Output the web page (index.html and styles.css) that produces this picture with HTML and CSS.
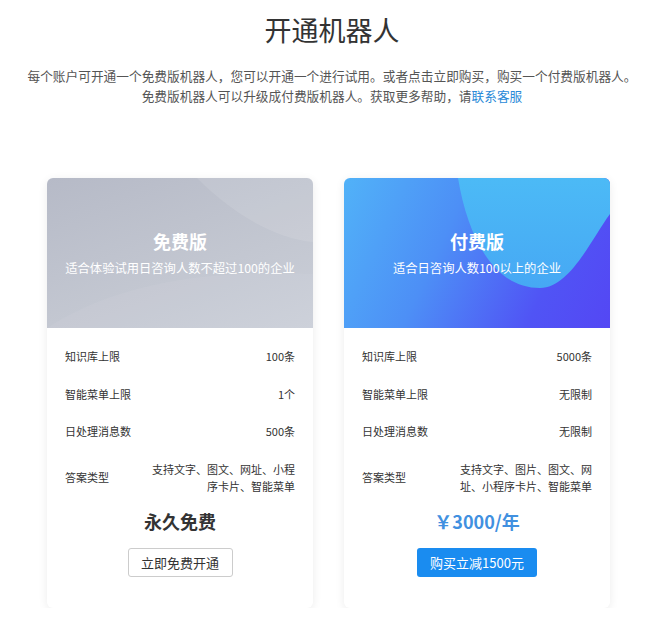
FILE: index.html
```html
<!DOCTYPE html>
<html lang="zh-CN">
<head>
    <meta charset="UTF-8">
    <meta name="viewport" content="width=device-width, initial-scale=1.0">
    <title>开通机器人</title>
    <link rel="stylesheet" href="styles.css">
</head>
<body>
    <h1 class="page-title">开通机器人</h1>
    <p class="page-desc">
        每个账户可开通一个免费版机器人，您可以开通一个进行试用。或者点击立即购买，购买一个付费版机器人。<br>
        免费版机器人可以升级成付费版机器人。获取更多帮助，请<a href="#" class="link">联系客服</a>
    </p>

    <div class="plans">
        <div class="plan">
            <div class="plan-head plan-head-free">
                <svg class="plan-deco" viewBox="0 0 266 150" preserveAspectRatio="none">
                    <path d="M150 0 C 190 40, 230 60, 266 64 L 266 0 Z" fill="#ffffff" fill-opacity="0.10"/>
                    <path d="M0 150 C 60 110, 150 90, 266 96 L 266 150 Z" fill="#ffffff" fill-opacity="0.05"/>
                </svg>
                <h3 class="plan-name">免费版</h3>
                <p class="plan-sub">适合体验试用日咨询人数不超过100的企业</p>
            </div>
            <div class="plan-body">
                <div class="row"><span>知识库上限</span><span>100条</span></div>
                <div class="row"><span>智能菜单上限</span><span>1个</span></div>
                <div class="row"><span>日处理消息数</span><span>500条</span></div>
                <div class="row"><span>答案类型</span><span class="val">支持文字、图文、网址、小程<br>序卡片、智能菜单</span></div>
                <div class="price">永久免费</div>
                <button class="btn btn-outline">立即免费开通</button>
            </div>
        </div>

        <div class="plan">
            <div class="plan-head plan-head-paid">
                <svg class="plan-deco" viewBox="0 0 266 150" preserveAspectRatio="none">
                    <defs>
                        <linearGradient id="cyan" x1="0" y1="0" x2="0" y2="1">
                            <stop offset="0" stop-color="#4cbaf6"/>
                            <stop offset="1" stop-color="#46a8f4"/>
                        </linearGradient>
                    </defs>
                    <path d="M114 0 C 124 60, 150 110, 196 110 C 226 110, 248 60, 266 36 L 266 0 Z" fill="url(#cyan)"/>
                </svg>
                <h3 class="plan-name">付费版</h3>
                <p class="plan-sub">适合日咨询人数100以上的企业</p>
            </div>
            <div class="plan-body">
                <div class="row"><span>知识库上限</span><span>5000条</span></div>
                <div class="row"><span>智能菜单上限</span><span>无限制</span></div>
                <div class="row"><span>日处理消息数</span><span>无限制</span></div>
                <div class="row"><span>答案类型</span><span class="val">支持文字、图片、图文、网<br>址、小程序卡片、智能菜单</span></div>
                <div class="price price-blue">￥3000/年</div>
                <button class="btn btn-primary">购买立减1500元</button>
            </div>
        </div>
    </div>
</body>
</html>
```

FILE: styles.css
```css
body {
    margin: 0;
    background-color: #fff;
    font-family: "Noto Sans CJK SC", "Noto Sans", sans-serif;
    color: #333;
}
.page-title {
    margin: 14px 0 0;
    font-size: 27px;
    line-height: 32px;
    font-weight: 400;
    text-align: center;
    color: #333;
}
.page-desc {
    margin: 20px 0 0;
    font-size: 12.7px;
    line-height: 20px;
    text-align: center;
    color: #555;
}
.link {
    color: #2a8ad8;
    text-decoration: none;
}
.plans {
    display: flex;
    gap: 31px;
    margin: 72px 0 0 47px;
}
.plan {
    width: 266px;
    background-color: #fff;
    border-radius: 6px;
    box-shadow: 0 2px 10px rgba(0, 0, 0, 0.08);
    overflow: hidden;
}
.plan-head {
    position: relative;
    height: 150px;
    box-sizing: border-box;
    padding-top: 51px;
    text-align: center;
    color: #fff;
}
.plan-head-free {
    background: linear-gradient(160deg, #b6bac7 0%, #c3c7d1 60%, #cbcfd8 100%);
}
.plan-head-paid {
    background: linear-gradient(115deg, #51b2f8 0%, #4d8ff6 38%, #5054f5 75%, #5447f4 100%);
}
.plan-deco {
    position: absolute;
    top: 0;
    left: 0;
    width: 100%;
    height: 100%;
}
.plan-name {
    position: relative;
    margin: 0;
    font-size: 18px;
    line-height: 24px;
    font-weight: 700;
}
.plan-sub {
    position: relative;
    margin: 6px 0 0;
    font-size: 12.3px;
    line-height: 18px;
}
.plan-body {
    display: flex;
    flex-direction: column;
    align-items: center;
    padding: 20px 18px 31px;
}
.row {
    align-self: stretch;
    display: flex;
    justify-content: space-between;
    align-items: center;
    font-size: 11px;
    line-height: 17px;
    color: #333;
    margin-bottom: 20.5px;
}
.row .val {
    text-align: right;
}
.price {
    margin-top: -6px;
    font-size: 18px;
    line-height: 24px;
    font-weight: 700;
    color: #333;
}
.price-blue {
    color: #4190e0;
}
.btn {
    margin-top: 15px;
    height: 29px;
    padding: 0;
    font-family: inherit;
    font-size: 13px;
    white-space: nowrap;
    border-radius: 3px;
    cursor: pointer;
}
.btn-outline {
    width: 105px;
    background-color: #fff;
    border: 1px solid #ccc;
    color: #333;
}
.btn-primary {
    width: 120px;
    background-color: #1a8cf0;
    border: none;
    color: #fff;
}
```
